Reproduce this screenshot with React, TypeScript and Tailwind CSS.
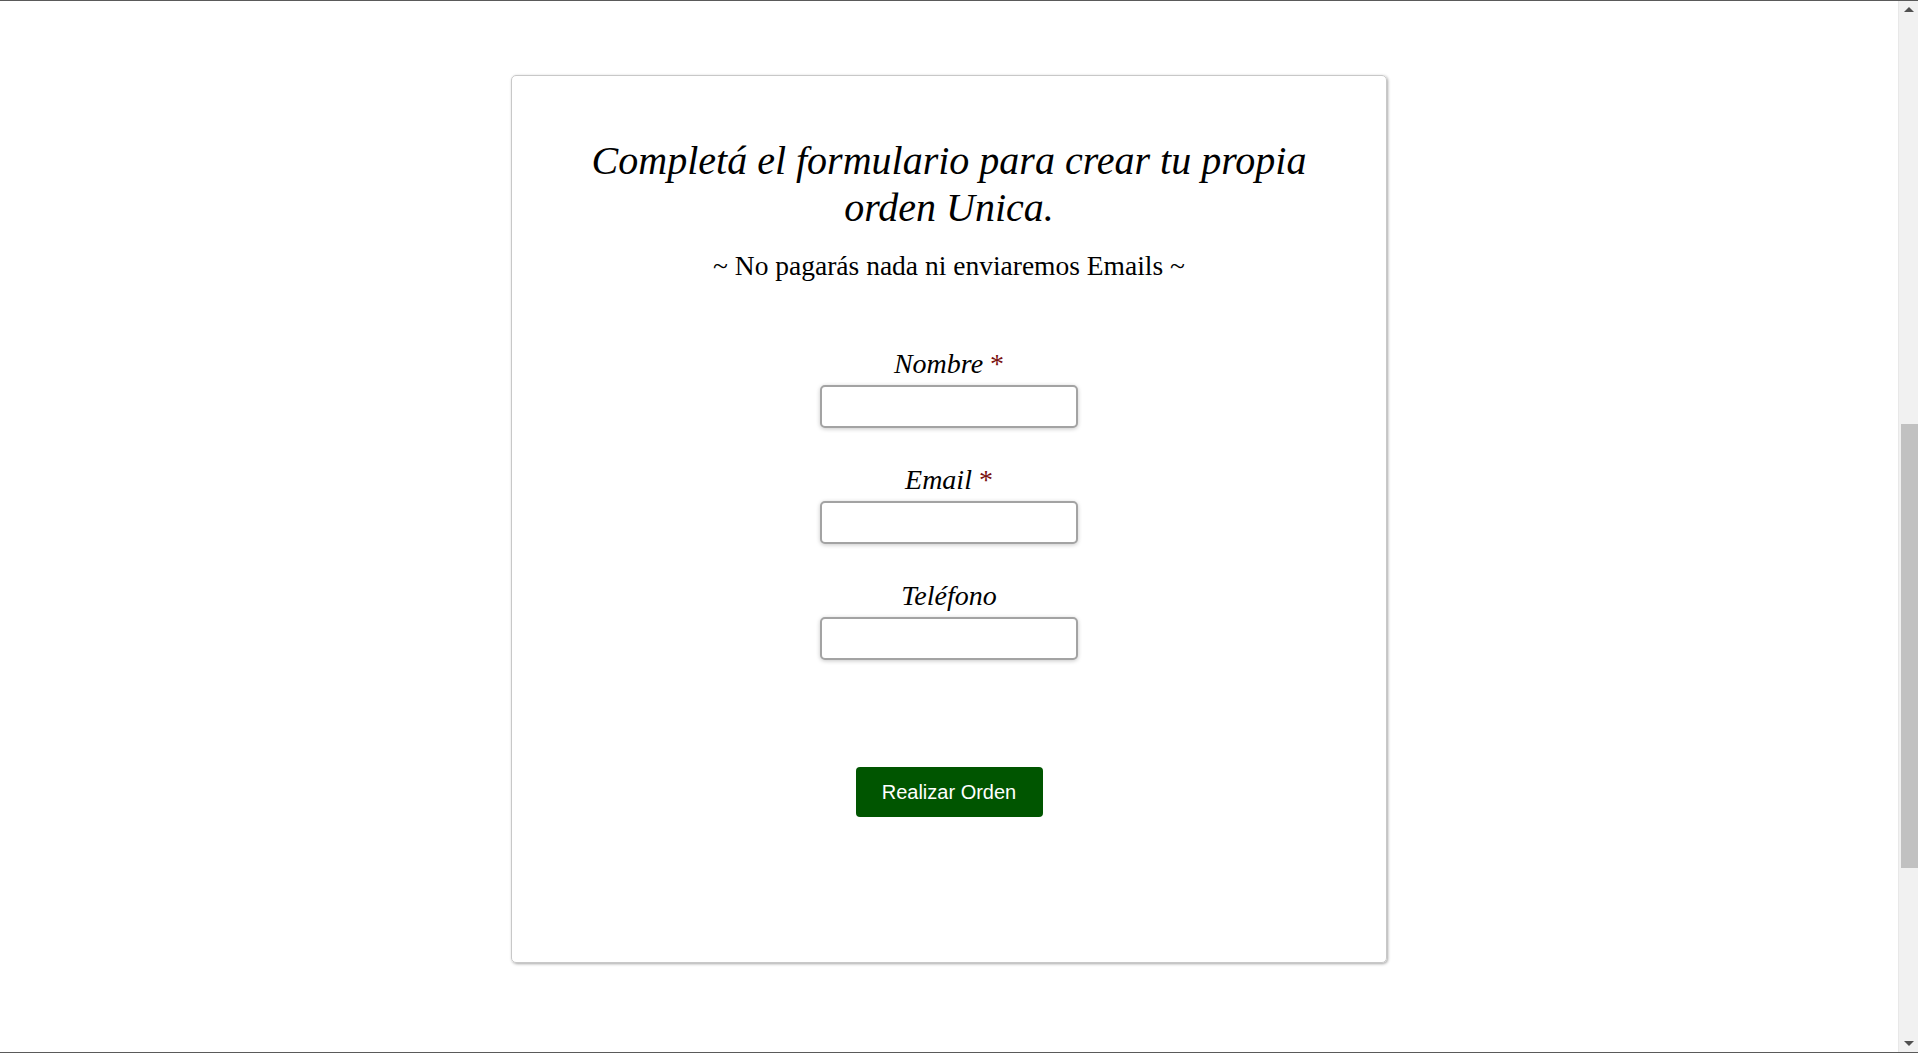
const FIELDS = [
  { label: 'Nombre', required: true },
  { label: 'Email', required: true },
  { label: 'Teléfono', required: false },
]

function Scrollbar() {
  return (
    <div className="w-[20px] bg-[#f1f1f1] border-l border-[#e8e8e8] flex flex-col items-center">
      <div className="h-[17px] flex items-center justify-center">
        <div className="w-0 h-0 border-l-[5px] border-r-[5px] border-b-[5px] border-l-transparent border-r-transparent border-b-[#505050]" />
      </div>
      <div className="h-[406px]" />
      <div className="w-[17px] ml-[1px] h-[444px] bg-[#c1c1c1]" />
      <div className="flex-1" />
      <div className="h-[17px] flex items-center justify-center">
        <div className="w-0 h-0 border-l-[5px] border-r-[5px] border-t-[5px] border-l-transparent border-r-transparent border-t-[#505050]" />
      </div>
    </div>
  )
}

export default function App() {
  return (
    <div className="h-[1053px] flex flex-col bg-white overflow-hidden">
      <div className="h-px bg-[#5a5a5a]" />
      <div className="flex-1 flex">
        <main className="flex-1 pt-[74px]">
          <div className="mx-auto w-[876px] h-[888px] rounded-[5px] border border-[#c8c8c8] shadow-[1px_1px_3px_rgba(0,0,0,0.35)] flex flex-col items-center font-['Liberation_Serif',serif] text-black">
            <h1 className="mt-[61px] w-[720px] text-center italic text-[40px] leading-[47px] font-normal">
              Completá el formulario para crear tu propia orden Unica.
            </h1>
            <p className="mt-[19px] text-[27.5px] leading-[32px]">~ No pagarás nada ni enviaremos Emails ~</p>
            <form className="mt-[66px] flex flex-col items-center gap-[36px]">
              {FIELDS.map((f) => (
                <div key={f.label} className="flex flex-col items-center">
                  <label className="italic text-[28px] leading-[32px]">
                    {f.label}
                    {f.required && <span className="not-italic text-[#7a1010]"> *</span>}
                  </label>
                  <input
                    type="text"
                    className="mt-[5px] w-[258px] h-[43px] rounded-[5px] border-2 border-[#a3a3a3] bg-white shadow-[0_1px_4px_rgba(0,0,0,0.22)] outline-none"
                  />
                </div>
              ))}
            </form>
            <button
              type="button"
              className="mt-[107px] w-[187px] h-[50px] rounded-[4px] bg-[#005500] text-white text-[20px] font-['Liberation_Sans',sans-serif]"
            >
              Realizar Orden
            </button>
          </div>
        </main>
        <Scrollbar />
      </div>
      <div className="h-px bg-[#5a5a5a]" />
    </div>
  )
}
